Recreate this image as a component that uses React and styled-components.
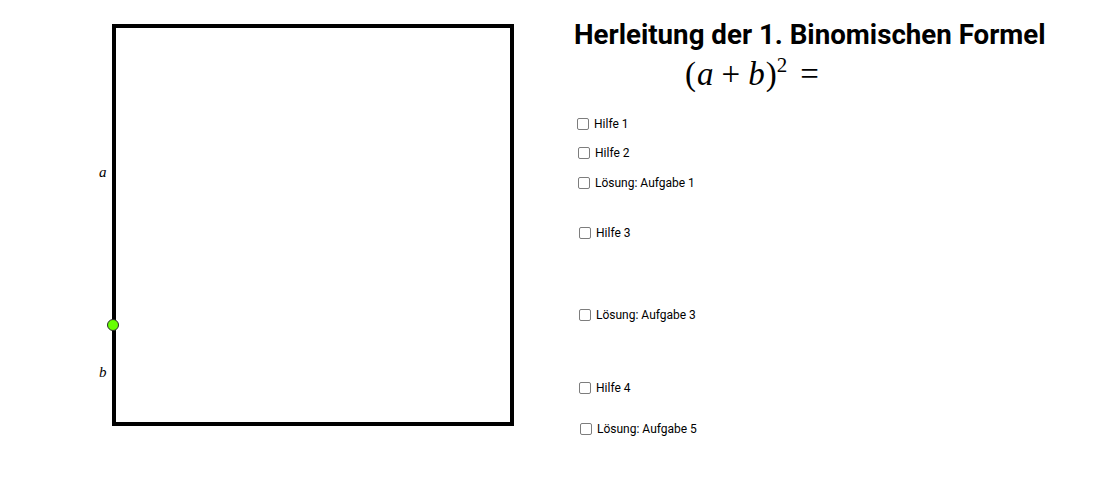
import React from 'react'
import styled, { createGlobalStyle } from 'styled-components'

const GlobalStyle = createGlobalStyle`
  html, body {
    margin: 0;
    padding: 0;
    background: #ffffff;
  }
  body {
    font-family: Roboto, "Liberation Sans", sans-serif;
    color: #000;
  }
`

const items = [
  { label: 'Hilfe 1', top: 116, shift: 0 },
  { label: 'Hilfe 2', top: 13, shift: 1 },
  { label: 'Lösung: Aufgabe 1', top: 14, shift: 1 },
  { label: 'Hilfe 3', top: 34, shift: 2 },
  { label: 'Lösung: Aufgabe 3', top: 66, shift: 2 },
  { label: 'Hilfe 4', top: 57, shift: 2 },
  { label: 'Lösung: Aufgabe 5', top: 25, shift: 3 }
]

const Figure = () => (
  <FigureSvg viewBox="0 0 574 500" width="574" height="500">
    <rect x="114" y="26" width="398" height="398" fill="none" stroke="#000" strokeWidth="4" />
    <text x="99" y="177" fontFamily="'Liberation Serif', serif" fontStyle="italic" fontSize="15">a</text>
    <text x="99" y="377" fontFamily="'Liberation Serif', serif" fontStyle="italic" fontSize="15">b</text>
    <circle cx="113" cy="325" r="5.5" fill="#66ff00" stroke="#2a2a2a" strokeWidth="1" />
  </FigureSvg>
)

export default function App() {
  return (
    <>
      <GlobalStyle />
      <Applet>
        <Figure />
        <Panel>
          <Title>Herleitung der 1. Binomischen Formel</Title>
          <Formula>
            (<Var>a</Var>
            <Op>+</Op>
            <Var>b</Var>)<Sup>2</Sup>
            <Op $right={0}>=</Op>
          </Formula>
          <List>
            {items.map((it) => (
              <Row key={it.label} $top={it.top} $shift={it.shift}>
                <Box />
                <Label>{it.label}</Label>
              </Row>
            ))}
          </List>
        </Panel>
      </Applet>
    </>
  )
}

const Applet = styled.div`
  display: flex;
  width: 1100px;
  height: 500px;
  overflow: hidden;
`

const FigureSvg = styled.svg`
  display: block;
  flex: none;
`

const Panel = styled.div`
  display: flex;
  flex-direction: column;
  padding-top: 17px;
  position: relative;
`

const Title = styled.div`
  font-family: Roboto, "Liberation Sans", sans-serif;
  font-weight: 700;
  font-size: 27.7px;
  line-height: 36px;
  white-space: nowrap;
`

const Formula = styled.div`
  display: flex;
  align-items: baseline;
  font-family: "Liberation Serif", "DejaVu Serif", serif;
  font-size: 33px;
  line-height: 36px;
  margin-top: 3px;
  margin-left: 111px;
  white-space: nowrap;
`

const Var = styled.span`
  font-style: italic;
  padding: 0 1px;
`

const Op = styled.span`
  margin: 0 ${(p) => (p.$right === 0 ? 0 : 7)}px 0 ${(p) => (p.$right === 0 ? 13 : 7)}px;
`

const Sup = styled.span`
  font-size: 21px;
  position: relative;
  top: -13px;
`

const List = styled.div`
  position: absolute;
  top: 0;
  left: 0;
  display: flex;
  flex-direction: column;
`

const Row = styled.div`
  display: flex;
  align-items: center;
  gap: 5px;
  height: 16px;
  margin-top: ${(p) => p.$top}px;
  margin-left: ${(p) => 3 + p.$shift}px;
`

const Box = styled.span`
  display: block;
  width: 10px;
  height: 10px;
  border: 1.5px solid #7d7d7d;
  border-radius: 2px;
  background: #fff;
`

const Label = styled.span`
  font-size: 12px;
  line-height: 16px;
  white-space: nowrap;
`
